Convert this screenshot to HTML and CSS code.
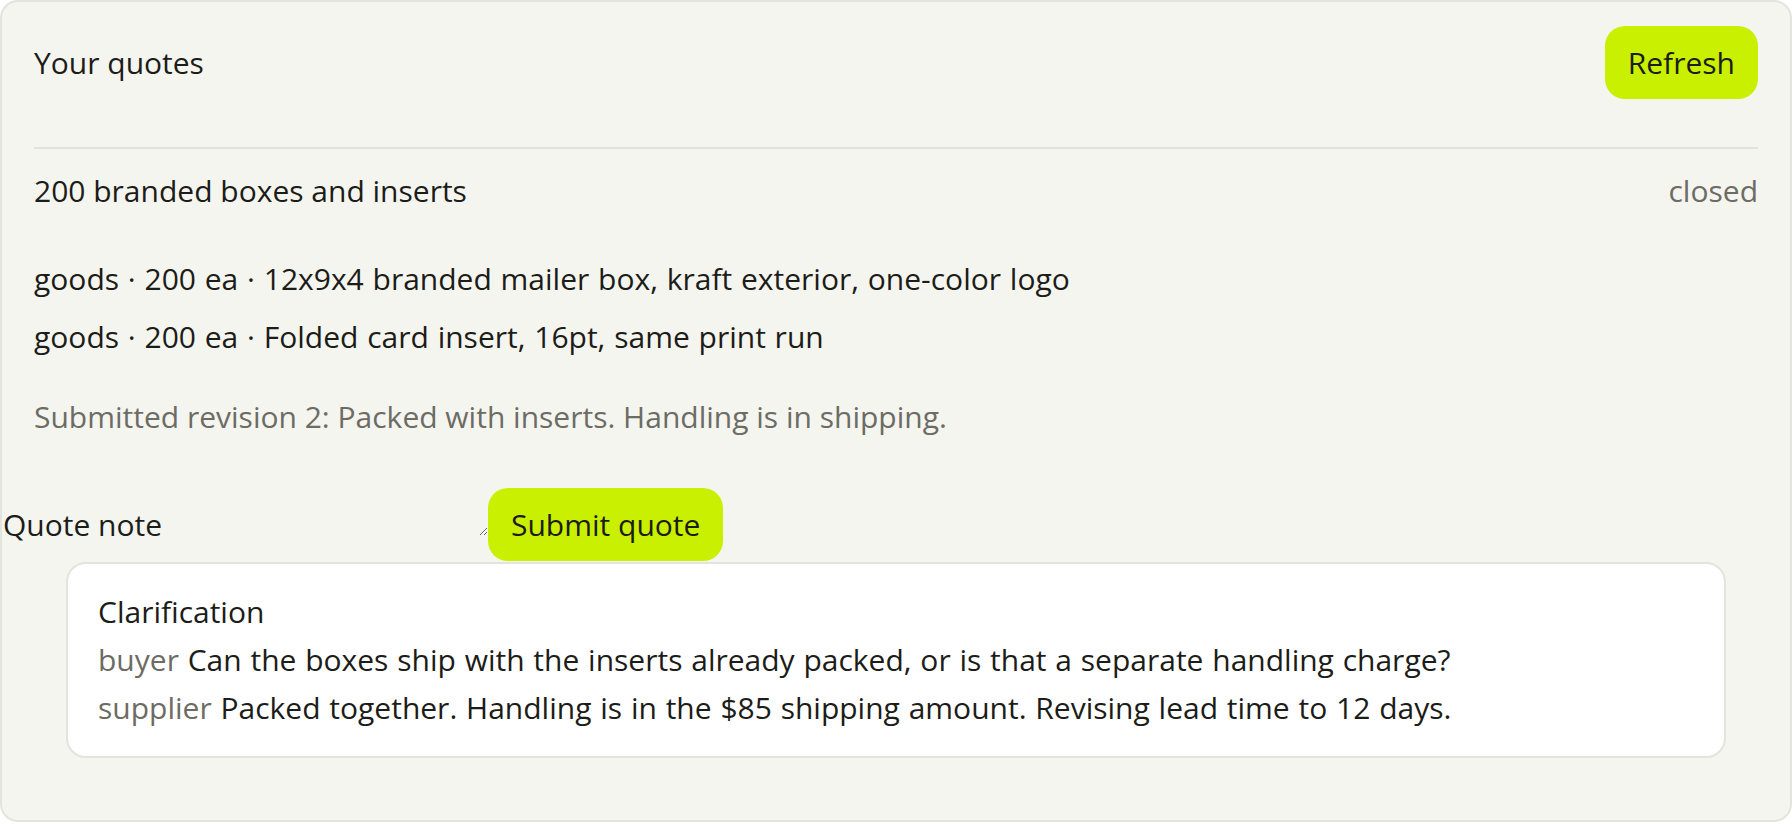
FILE: index.html
```html
<!DOCTYPE html>
<html lang="en">
<head>
    <meta charset="UTF-8">
    <meta name="viewport" content="width=device-width, initial-scale=1.0">
    <title>Your quotes</title>
    <link rel="stylesheet" href="styles.css">
</head>
<body>
    <section class="panel">
        <div class="panel-head">
            <span class="panel-title">Your quotes</span>
            <button class="btn" type="button">Refresh</button>
        </div>
        <div class="quote">
            <div class="quote-head">
                <span>200 branded boxes and inserts</span>
                <span class="muted">closed</span>
            </div>
            <ul class="quote-lines">
                <li>goods · 200 ea · 12x9x4 branded mailer box, kraft exterior, one-color logo</li>
                <li>goods · 200 ea · Folded card insert, 16pt, same print run</li>
            </ul>
            <p class="quote-status muted">Submitted revision 2: Packed with inserts. Handling is in shipping.</p>
            <form class="quote-form">
                <label class="quote-label" for="note">Quote note</label>
                <textarea class="quote-note" id="note"></textarea>
                <button class="btn" type="button">Submit quote</button>
            </form>
            <div class="thread">
                <div>Clarification</div>
                <div><span class="muted">buyer</span> Can the boxes ship with the inserts already packed, or is that a separate handling charge?</div>
                <div><span class="muted">supplier</span> Packed together. Handling is in the $85 shipping amount. Revising lead time to 12 days.</div>
            </div>
        </div>
    </section>
</body>
</html>
```

FILE: styles.css
```css
body {
    margin: 0;
    background: #ffffff;
    font-family: "Open Sans", "Noto Sans", sans-serif;
    font-size: 30px;
    line-height: 48px;
    color: #1c1c18;
}
.panel {
    box-sizing: border-box;
    width: 1792px;
    background: #f5f5f0;
    border: 2px solid #e4e4de;
    border-radius: 18px;
    padding: 24px 32px 30px;
}
.panel-head {
    display: flex;
    justify-content: space-between;
    align-items: center;
    padding-bottom: 48px;
    border-bottom: 2px solid #e2e2dc;
}
.btn {
    font: inherit;
    line-height: 49px;
    color: #1c1c18;
    background: #c8f000;
    border: none;
    border-radius: 20px;
    padding: 12px 23px;
}
.muted {
    color: #6c6c64;
}
.quote {
    padding-top: 18px;
}
.quote-head {
    display: flex;
    justify-content: space-between;
}
.quote-lines {
    list-style: none;
    margin: 40px 0 0;
    padding: 0;
    display: flex;
    flex-direction: column;
    gap: 10px;
    word-spacing: 1px;
}
.quote-status {
    margin: 32px 0 0;
}
.quote-form {
    display: flex;
    align-items: center;
    margin: 47px 0 0 -31px;
}
.quote-label {
    width: 160px;
}
.quote-note {
    box-sizing: border-box;
    width: 325px;
    height: 32px;
    margin-bottom: 10px;
    padding: 0;
    border: none;
    background: transparent;
}
.thread {
    margin: 1px 32px 32px;
    background: #ffffff;
    border: 2px solid #e4e4de;
    border-radius: 20px;
    padding: 24px 30px;
    word-spacing: 1px;
}
```
